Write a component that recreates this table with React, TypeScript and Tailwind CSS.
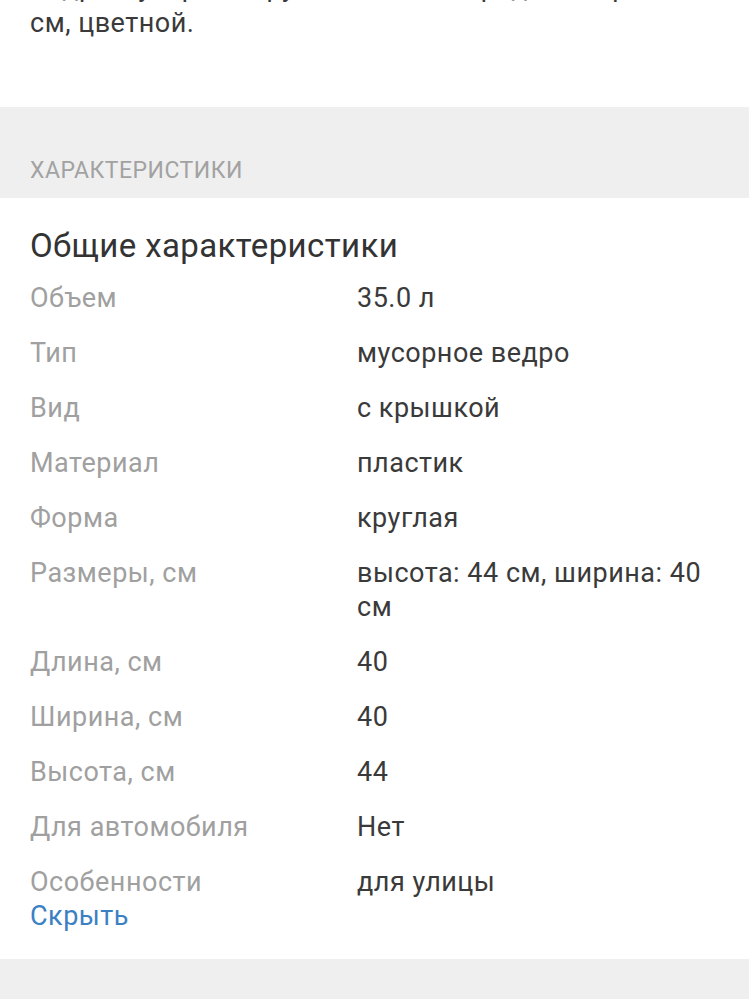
const specs: { label: string; value: string }[] = [
  { label: "Объем", value: "35.0 л" },
  { label: "Тип", value: "мусорное ведро" },
  { label: "Вид", value: "с крышкой" },
  { label: "Материал", value: "пластик" },
  { label: "Форма", value: "круглая" },
  { label: "Размеры, см", value: "высота: 44 см, ширина: 40 см" },
  { label: "Длина, см", value: "40" },
  { label: "Ширина, см", value: "40" },
  { label: "Высота, см", value: "44" },
  { label: "Для автомобиля", value: "Нет" },
  { label: "Особенности", value: "для улицы" },
];

export default function App() {
  return (
    <div className="min-h-screen overflow-hidden bg-white font-['Roboto','Liberation_Sans',sans-serif]">
      {/* description tail */}
      <div className="px-[30px] pb-[66px]">
        <p className="mt-[-31px] text-[27px] leading-[36px] tracking-[0.5px] text-[#3a3a3a]">
          Ведро мусорное круглое, 44 х 40 пр. дл. 40 ср.
          <br />
          см, цветной.
        </p>
      </div>

      {/* section header */}
      <div className="bg-[#efefef] px-[30px] pt-[50px] pb-[13px]">
        <h2 className="text-[23px] leading-[28px] tracking-[0.5px] uppercase text-[#a2a2a2]">
          Характеристики
        </h2>
      </div>

      <div className="px-[30px] pt-[28px] pb-[26px]">
        <h3 className="text-[33px] leading-[40px] tracking-[0.4px] text-[#333333]">
          Общие характеристики
        </h3>
        <dl className="mt-[15px] flex flex-col gap-[21px]">
          {specs.map((s) => (
            <div
              key={s.label}
              className="grid grid-cols-[327px_1fr] text-[27px] leading-[34px] tracking-[0.5px]"
            >
              <dt className="text-[#a0a0a0]">{s.label}</dt>
              <dd className="text-[#3a3a3a]">{s.value}</dd>
            </div>
          ))}
        </dl>
        <button className="block text-[27px] leading-[34px] tracking-[0.5px] text-[#3b80c3]">
          Скрыть
        </button>
      </div>

      <div className="h-[60px] bg-[#efefef]" />
    </div>
  );
}
